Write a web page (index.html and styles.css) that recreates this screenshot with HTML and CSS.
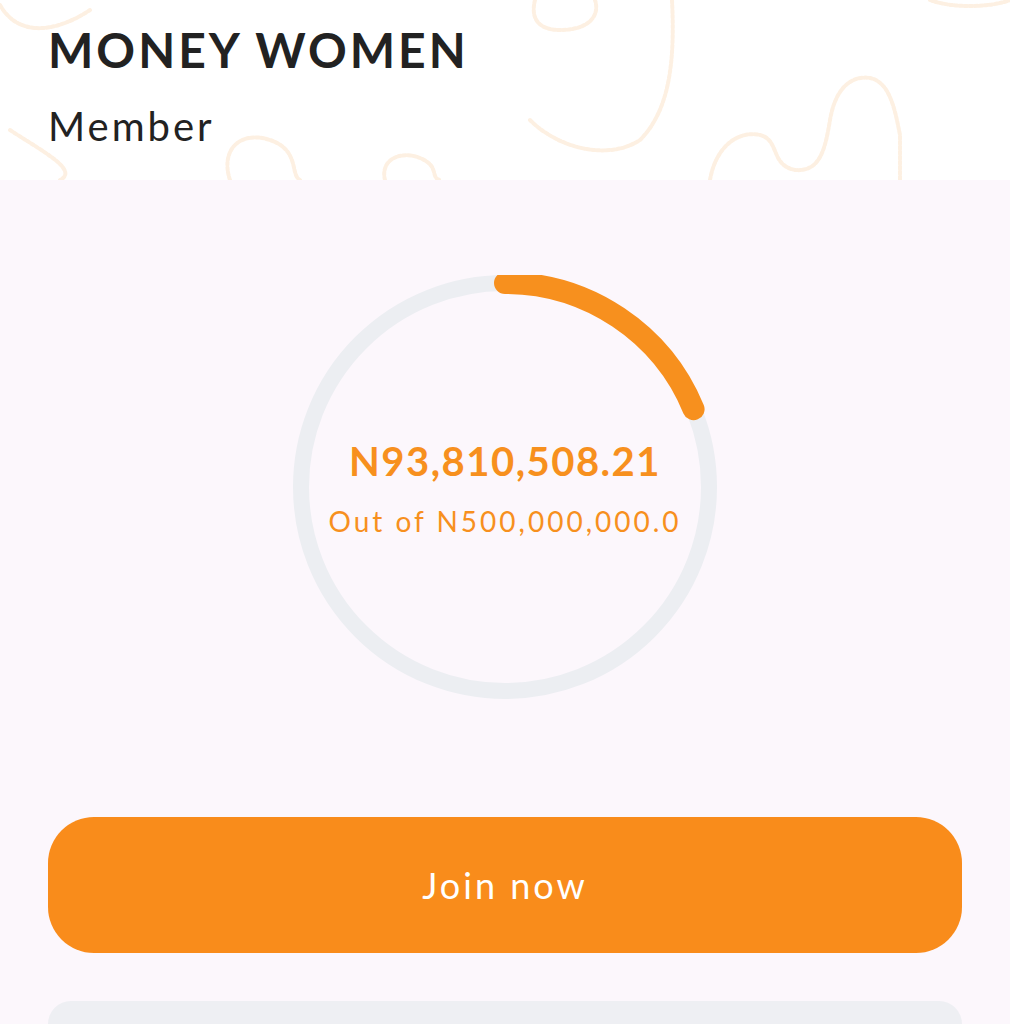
FILE: index.html
```html
<!DOCTYPE html>
<html lang="en">
<head>
    <meta charset="UTF-8">
    <meta name="viewport" content="width=device-width, initial-scale=1.0">
    <title>Money Women</title>
    <link rel="stylesheet" href="styles.css">
</head>
<body>
    <div class="header">
        <!-- faint dashed doodles behind the title -->
        <svg class="doodles" width="1010" height="180" viewBox="0 0 1010 180">
            <path d="M0 5 C20 40 60 30 90 10" />
            <path d="M10 130 C40 150 80 170 60 180" />
            <path d="M230 180 C220 150 240 130 270 140 C300 150 290 175 300 180" />
            <path d="M385 180 C380 160 400 150 420 158 C440 166 430 178 440 180" />
            <path d="M535 0 C530 20 540 30 560 30 C590 30 600 15 595 0" />
            <path d="M672 0 C675 60 670 110 640 140 C610 160 560 150 530 120" />
            <path d="M710 180 C715 150 735 130 760 135 C780 140 770 165 795 170 C820 172 825 150 830 120 C835 90 850 75 870 78 C890 82 895 110 900 135 L900 180" />
            <path d="M930 0 C950 8 990 8 1010 0" />
        </svg>
        <h1>MONEY WOMEN</h1>
        <p>Member</p>
    </div>

    <div class="main">
        <div class="progress">
            <svg class="ring" width="424" height="424" viewBox="0 0 424 424">
                <circle class="ring-track" cx="212" cy="212" r="204" />
                <circle class="ring-fill" cx="212" cy="212" r="204"
                    stroke-dasharray="240.5 1281.8" transform="rotate(-90 212 212)" />
            </svg>
            <div class="progress-text">
                <div class="amount">N93,810,508.21</div>
                <div class="target">Out of N500,000,000.0</div>
            </div>
        </div>

        <button class="btn">Join now</button>

        <div class="next-card"></div>
    </div>
</body>
</html>
```

FILE: styles.css
```css
* {
    margin: 0;
    padding: 0;
    box-sizing: border-box;
}

body {
    font-family: Lato, "Open Sans", sans-serif;
    background: #fcf7fc;
    width: 1010px;
    height: 1024px;
    overflow: hidden;
}

.header {
    position: relative;
    height: 180px;
    background: #ffffff;
    padding: 22px 48px 0;
}

.doodles {
    position: absolute;
    left: 0;
    top: 0;
}

.doodles path {
    fill: none;
    stroke: #fdf0e2;
    stroke-width: 4;
    stroke-dasharray: 3 2;
    stroke-linecap: round;
}

.header h1 {
    position: relative;
    font-size: 48px;
    font-weight: 700;
    color: #222222;
    letter-spacing: 3px;
    line-height: 56px;
}

.header p {
    position: relative;
    font-size: 40px;
    color: #222222;
    letter-spacing: 3px;
    margin-top: 26px;
    line-height: 44px;
}

.main {
    display: flex;
    flex-direction: column;
    align-items: center;
    padding: 95px 48px 0;
}

.progress {
    position: relative;
    width: 424px;
    height: 424px;
}

.ring circle {
    fill: none;
}

.ring-track {
    stroke: #eceef2;
    stroke-width: 16;
}

.ring-fill {
    stroke: #f7901e;
    stroke-width: 22;
    stroke-linecap: round;
}

.progress-text {
    position: absolute;
    left: 0;
    right: 0;
    top: 158px;
    text-align: center;
    color: #f7901e;
}

.amount {
    font-size: 40px;
    font-weight: 700;
    letter-spacing: 1.5px;
    line-height: 56px;
}

.target {
    font-size: 28px;
    letter-spacing: 3px;
    margin-top: 14px;
    line-height: 36px;
}

.btn {
    width: 100%;
    height: 136px;
    margin-top: 118px;
    border: none;
    border-radius: 46px;
    background: #f98c1b;
    color: #ffffff;
    font-family: Lato, "Open Sans", sans-serif;
    font-size: 36px;
    letter-spacing: 3px;
    cursor: pointer;
}

.next-card {
    width: 100%;
    height: 23px;
    margin-top: 48px;
    background: #eeeff3;
    border-radius: 30px 30px 0 0;
}
```
